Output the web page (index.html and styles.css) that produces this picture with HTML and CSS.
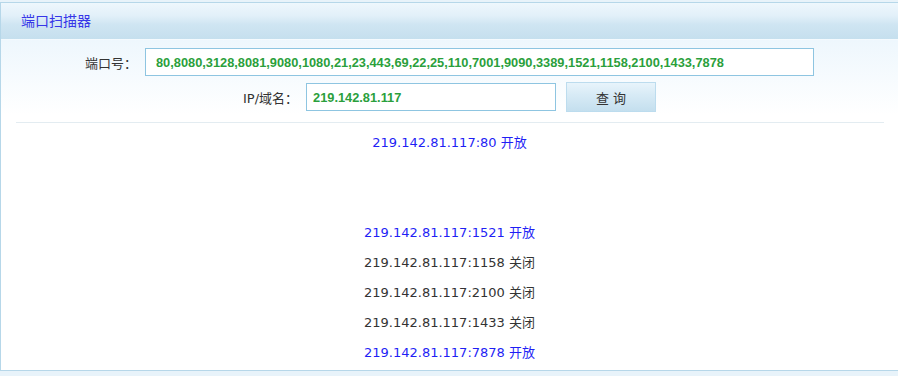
FILE: index.html
```html
<!DOCTYPE html>
<html lang="zh">
<head>
<meta charset="utf-8">
<title>端口扫描器</title>
<link rel="stylesheet" href="styles.css">
</head>
<body>
<div class="panel">
  <div class="panel-head">端口扫描器</div>
  <div class="panel-body">
    <div class="form">
      <div class="row">
        <label class="label">端口号<span class="colon">：</span></label>
        <input class="field field-ports" type="text" value="80,8080,3128,8081,9080,1080,21,23,443,69,22,25,110,7001,9090,3389,1521,1158,2100,1433,7878">
      </div>
      <div class="row">
        <label class="label">IP/域名<span class="colon">：</span></label>
        <input class="field field-ip" type="text" value="219.142.81.117">
        <button class="btn" type="button">查 询</button>
      </div>
    </div>
    <div class="sep"></div>
    <div class="results">
      <div class="res open">219.142.81.117:80 开放</div>
      <div class="res"></div>
      <div class="res"></div>
      <div class="res open">219.142.81.117:1521 开放</div>
      <div class="res closed">219.142.81.117:1158 关闭</div>
      <div class="res closed">219.142.81.117:2100 关闭</div>
      <div class="res closed">219.142.81.117:1433 关闭</div>
      <div class="res open">219.142.81.117:7878 开放</div>
    </div>
  </div>
</div>
</body>
</html>
```

FILE: styles.css
```css
html, body {
  margin: 0;
  padding: 0;
  overflow: hidden;
}
body {
  background: #e8f3fa;
  font-family: "DejaVu Sans", "Noto Sans CJK SC", sans-serif;
  font-size: 13px;
  color: #333;
  padding-top: 2px;
}
.panel {
  height: 367px;
  border: 1px solid #b6d7e9;
  border-right: none;
  background: #fff;
  display: flex;
  flex-direction: column;
}
.panel-head {
  height: 36px;
  line-height: 36px;
  padding-left: 20px;
  font-size: 14px;
  color: #3636e8;
  background: linear-gradient(to bottom, #eef7fd 0%, #e2f0f9 35%, #cfe5f2 60%, #c5dfee 100%);
  border-bottom: 1px solid #f4fafe;
}
.panel-body {
  flex: 1;
  background: linear-gradient(to bottom, #eef7fd 0px, #ffffff 75px);
}
.form {
  padding-top: 8px;
  display: flex;
  flex-direction: column;
  gap: 6px;
}
.row {
  display: flex;
  justify-content: center;
  align-items: center;
  gap: 8px;
}
.label {
  color: #333;
}
.colon {
  display: inline-block;
  width: 13px;
  text-align: center;
}
.field {
  box-sizing: border-box;
  height: 28px;
  border: 1px solid #8ec5e1;
  background: #fff;
  font-family: "Liberation Sans", sans-serif;
  font-weight: bold;
  font-size: 12.8px;
  color: #2b9f3c;
  outline: none;
  margin: 0;
}
.field-ports {
  width: 669px;
  padding: 0 0 0 10px;
}
.field-ip {
  width: 250px;
  padding: 0 0 0 6px;
}
.btn {
  box-sizing: border-box;
  width: 90px;
  height: 30px;
  margin: 0 0 0 2px;
  border: 1px solid #bcdcee;
  background: linear-gradient(to bottom, #e8f4fb 0%, #d8ebf6 40%, #c4dfee 100%);
  font-family: "DejaVu Sans", "Noto Sans CJK SC", sans-serif;
  font-size: 13px;
  color: #333;
  padding: 0;
}
.sep {
  height: 1px;
  background: #e3ecf1;
  margin: 10px 14px 0 15px;
}
.results {
  padding-top: 5px;
  text-align: center;
}
.res {
  height: 30px;
  line-height: 30px;
}
.open {
  color: #1f1ff5;
}
.closed {
  color: #333;
}
```
